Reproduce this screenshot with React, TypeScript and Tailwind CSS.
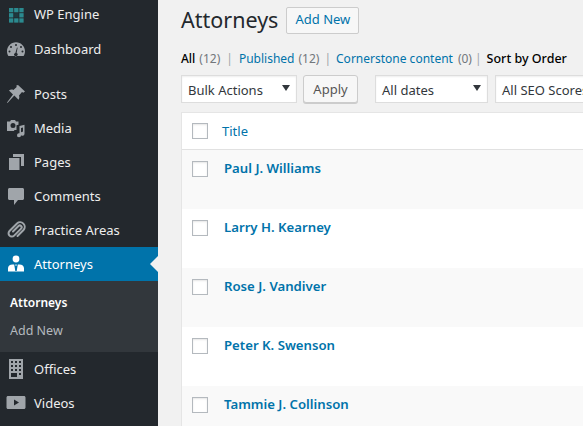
import { ReactNode } from "react"

const icon = "w-5 h-5 fill-[#a0a5aa]"

function WpEngine() {
  return (
    <svg viewBox="0 0 16 16" className="w-[15px] h-[15px]">
      {[0, 5.5, 11].map((x) =>
        [0, 5.5, 11].map((y) => (
          <rect key={`${x}-${y}`} x={x} y={y} width="4.6" height="4.6" fill={x === 5.5 && y === 5.5 ? "#1d3a40" : "#2b8a8f"} />
        ))
      )}
    </svg>
  )
}

const Dashboard = () => (
  <svg viewBox="0 0 20 20" className={icon}>
    <path fillRule="evenodd" d="M10 3.200c-5 0-9 4-9 9 0 1.800.5 3.400 1.400 4.800h15.200c.9-1.400 1.400-3 1.400-4.800 0-5-4-9-9-9zM10 5a1 1 0 1 1 0 2 1 1 0 0 1 0-2zM5 7a1 1 0 1 1 0 2 1 1 0 0 1 0-2zm10 0a1 1 0 1 1 0 2 1 1 0 0 1 0-2zM3.500 11.500a1 1 0 1 1 0 2 1 1 0 0 1 0-2zm13 0a1 1 0 1 1 0 2 1 1 0 0 1 0-2zM11 8.500l.6.200-1 5.400a1.700 1.700 0 1 1-1.200-.100z" />
  </svg>
)

const Pin = () => (
  <svg viewBox="0 0 20 20" className={icon}>
    <path d="M12 1l7 6.500-1.700 1.200-1.300-.6-3 3.300c.6 1.700.4 3-.5 4.300L8.300 11.500 1.500 19 1 18.500l6-8-4-4c1.300-.9 2.800-1.200 4.400-.5l3.300-3-.4-1.400z" />
  </svg>
)

const Media = () => (
  <svg viewBox="0 0 20 20" className={icon}>
    <path fillRule="evenodd" d="M1 3.500h3l1-1.500h4l1 1.500h2.500v3.200l-2 .6V12H8.500l-.6 1H1zM7 5a2.500 2.500 0 1 0 0 5 2.500 2.500 0 0 0 0-5z" />
    <path d="M13.500 8l5-1.300v9a2 2 0 1 1-1.500-1.900V9.500l-2 .5v7.200a2 2 0 1 1-1.500-1.900z" />
  </svg>
)

const Pages = () => (
  <svg viewBox="0 0 20 20" className={icon}>
    <path d="M7 2h11v12h-3V5H7z" />
    <path d="M3 6h10.500v12H3z" />
  </svg>
)

const Comment = () => (
  <svg viewBox="0 0 20 20" className={icon}>
    <path d="M3.500 2h13c.8 0 1.500.7 1.500 1.500v9c0 .8-.7 1.500-1.500 1.500H12l-4 5v-5H3.500C2.700 14 2 13.300 2 12.500v-9C2 2.700 2.700 2 3.500 2z" />
  </svg>
)

const Clip = () => (
  <svg viewBox="0 0 20 20" className="w-5 h-5 fill-none stroke-[#a0a5aa]" strokeWidth="2" strokeLinecap="round">
    <path d="M7 11.500l5.500-5.500a1.800 1.800 0 0 1 2.600 2.600l-7 7a3.200 3.200 0 0 1-4.600-4.600l7.500-7.500a4.600 4.600 0 0 1 6.500 6.500l-6 6" />
  </svg>
)

const Person = () => (
  <svg viewBox="0 0 20 20" className="w-5 h-5 fill-white">
    <circle cx="10" cy="5" r="3.400" />
    <path d="M2 17.500v-3.300c0-2.300 1.800-3.700 4.500-3.700h1.700l1.100 6.500h1.400l1.100-6.500h1.700c2.700 0 4.500 1.400 4.500 3.700v3.300z" />
    <path d="M9.200 10.500h1.600l-.3 1.300h-1z" />
  </svg>
)

const Building = () => (
  <svg viewBox="0 0 20 20" className={icon}>
    <path fillRule="evenodd" d="M3 0h14v20H3zM5 2v2h2V2zm4 0v2h2V2zm4 0v2h2V2zM5 6v2h2V6zm4 0v2h2V6zm4 0v2h2V6zM5 10v2h2v-2zm4 0v2h2v-2zm4 0v2h2v-2zM5 14v4h6v-4zm8 0v2h2v-2z" />
  </svg>
)

const Video = () => (
  <svg viewBox="0 0 20 20" className={icon}>
    <path fillRule="evenodd" d="M2 3h16c.8 0 1.500.7 1.500 1.500v10c0 .8-.7 1.500-1.500 1.500H2c-.8 0-1.500-.7-1.500-1.500v-10C.5 3.700 1.200 3 2 3zM8 6.500v6l5-3z" />
  </svg>
)

function MenuItem({ icon, label, active }: { icon: ReactNode; label: string; active?: boolean }) {
  return (
    <div className={`relative flex items-center h-[34px] text-[13px] ${active ? "bg-[#0073aa] text-white" : "text-[#eeeeee]"}`}>
      <div className="w-[34px] pl-[6px] flex items-center justify-start">{icon}</div>
      <span className="mt-[2px]">{label}</span>
      {active && (
        <div className="absolute right-0 top-[9px] w-0 h-0 border-y-[8px] border-y-transparent border-r-[8px] border-r-[#f1f1f1]" />
      )}
    </div>
  )
}

function Checkbox() {
  return <div className="w-4 h-4 bg-white border border-[#b4b9be] shadow-[inset_0_1px_2px_rgba(0,0,0,0.1)]" />
}

function Select({ label, className }: { label: string; className: string }) {
  return (
    <div className={`relative shrink-0 h-[28px] bg-white border border-[#dddddd] flex items-center pl-[6px] pt-[3px] text-[13px] text-[#32373c] whitespace-nowrap overflow-hidden shadow-[inset_0_1px_2px_rgba(0,0,0,0.07)] ${className}`}>
      {label}
      <div className="absolute right-[6px] top-[9px] w-0 h-0 border-x-[4px] border-x-transparent border-t-[6px] border-t-[#32373c]" />
    </div>
  )
}

const attorneys = ["Paul J. Williams", "Larry H. Kearney", "Rose J. Vandiver", "Peter K. Swenson", "Tammie J. Collinson"]

export default function App() {
  return (
    <div className="w-[583px] h-[426px] overflow-hidden flex bg-[#f1f1f1] font-['Noto_Sans','Open_Sans',sans-serif]">
      <aside className="w-[158px] shrink-0 bg-[#23282d]">
        <div className="h-[32px] -mt-[1px] flex items-center text-[13px] text-[#eeeeee]">
          <div className="w-[34px] pl-[9px] flex items-center"><WpEngine /></div>
          <span>WP Engine</span>
        </div>
        <div className="mt-[1px]">
          <MenuItem icon={<Dashboard />} label="Dashboard" />
        </div>
        <div className="mt-[11px]">
          <MenuItem icon={<Pin />} label="Posts" />
          <MenuItem icon={<Media />} label="Media" />
          <MenuItem icon={<Pages />} label="Pages" />
          <MenuItem icon={<Comment />} label="Comments" />
          <MenuItem icon={<Clip />} label="Practice Areas" />
          <MenuItem icon={<Person />} label="Attorneys" active />
        </div>
        <div className="h-[71px] bg-[#32373c] pt-[8px] pl-[10px]">
          <div className="h-[28px] flex items-center text-[12px] font-semibold text-white">Attorneys</div>
          <div className="h-[28px] flex items-center text-[12.500px] text-[#b4b9be]">Add New</div>
        </div>
        <MenuItem icon={<Building />} label="Offices" />
        <MenuItem icon={<Video />} label="Videos" />
      </aside>

      <main className="flex-1 min-w-0 pl-[23px]">
        <div className="flex items-center h-[40px]">
          <h1 className="text-[21.500px] text-[#23282d] leading-none">Attorneys</h1>
          <div className="ml-[8px] h-[27px] w-[73px] flex items-center justify-center text-[13px] text-[#0073aa] bg-[#f7f7f7] border border-[#cccccc] rounded-[2px]">Add New</div>
        </div>

        <div className="mt-[10px] h-[18px] flex items-center text-[12px] whitespace-nowrap text-[#72777c]">
          <span className="font-medium text-black">All</span>
          <span className="ml-[4px]">(12)</span>
          <span className="mx-[6px] text-[#a0a5aa]">|</span>
          <span className="text-[#0073aa]">Published</span>
          <span className="ml-[4px]">(12)</span>
          <span className="mx-[5px] text-[#a0a5aa]">|</span>
          <span className="text-[#0073aa]">Cornerstone content</span>
          <span className="ml-[5px]">(0)</span>
          <span className="mx-[3px] text-[#a0a5aa]">|</span>
          <span className="ml-[2px] text-[12.500px] font-medium text-black">Sort by Order</span>
        </div>

        <div className="mt-[7px] flex items-center">
          <Select label="Bulk Actions" className="w-[116px]" />
          <div className="ml-[6px] shrink-0 w-[55px] h-[28px] pt-[1px] flex items-center justify-center text-[13px] text-[#555555] bg-[#f7f7f7] border border-[#cccccc] rounded-[3px] shadow-[0_1px_0_#cccccc]">Apply</div>
          <Select label="All dates" className="ml-[17px] w-[113px]" />
          <Select label="All SEO Scores" className="ml-[7px] w-[120px]" />
        </div>

        <div className="mt-[9px] w-[500px] border border-[#e5e5e5] border-b-0">
          <div className="h-[37px] bg-white border-b border-[#e1e1e1] flex items-center pl-[10px]">
            <Checkbox />
            <span className="ml-[14px] mt-[2px] text-[13px] text-[#0073aa]">Title</span>
          </div>
          {attorneys.map((name, i) => (
            <div key={name} className={`h-[59px] flex items-start pl-[10px] pt-[11px] ${i % 2 === 0 ? "bg-[#f9f9f9]" : "bg-white"}`}>
              <Checkbox />
              <span className="ml-[16px] -mt-[2px] text-[13.200px] font-semibold text-[#0073aa]">{name}</span>
            </div>
          ))}
        </div>
      </main>
    </div>
  )
}
